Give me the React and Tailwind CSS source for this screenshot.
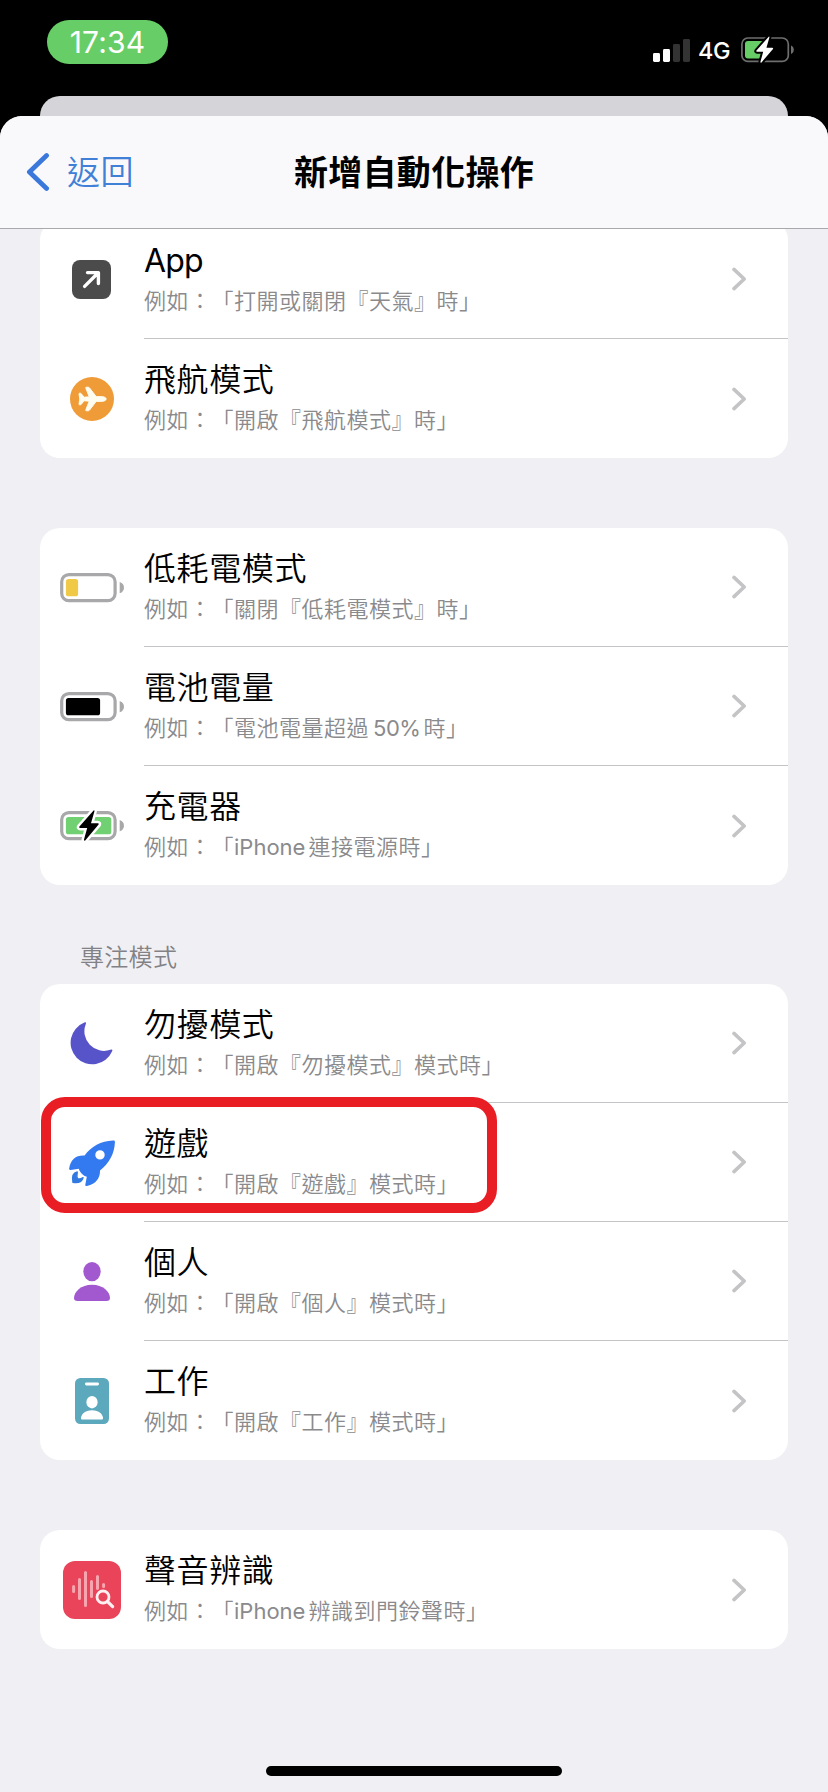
import React from "react";

function Bolt({ fill, halo, haloWidth }) {
  const d = "M33.6 -0.6 L19.4 15.6 Q18.6 16.9 20 16.9 H27.2 L24 28.6 Q24 30.4 25.2 29.4 L38.6 13.6 Q39.2 12.3 37.8 12.3 H31 L34.4 0.4 Q34.6 -1.2 33.6 -0.6 Z";
  return (
    <g>
      <path d={d} fill={halo} stroke={halo} strokeWidth={haloWidth} strokeLinejoin="round" />
      <path d={d} fill={fill} />
    </g>
  );
}

function BatteryIcon({ level, color, charging }) {
  return (
    <svg className="h-[30px] w-16 overflow-visible" viewBox="0 0 64 30">
      <rect x="1.7" y="1.6" width="53.4" height="26.1" rx="7.2" fill="none" stroke="#a8a8aa" strokeWidth="3.2" />
      <path d="M59.7 9.1 C62.6 10.1 64 12.3 64 14.7 C64 17.1 62.6 19.3 59.7 20.3 Z" fill="#a8a8aa" />
      <rect x="5.9" y="5.9" width={level} height="17.4" rx="2.6" fill={color} />
      {charging && <Bolt fill="#000000" halo="#ffffff" haloWidth="5" />}
    </svg>
  );
}

function AppIcon() {
  return (
    <svg className="h-[39px] w-[39px]" viewBox="0 0 39 39">
      <rect width="39" height="39" rx="8" fill="#4b4b4b" />
      <path d="M12.6 26.4 L26 13 M15.5 12.6 H26.4 V23.5" fill="none" stroke="#ffffff" strokeWidth="3.4" strokeLinecap="round" strokeLinejoin="round" />
    </svg>
  );
}

function AirplaneIcon() {
  return (
    <svg className="h-11 w-11" viewBox="0 0 44 44">
      <circle cx="22" cy="22" r="22" fill="#ee9b38" />
      <path
        d="M36.2 22 C36.2 20.6 34 19.6 31.5 19.6 H26.2 L19.6 11 Q19 10.2 18 10.2 H16.4 Q15.4 10.2 15.8 11.2 L19.2 19.8 L14 20.2 L11.4 16.8 Q11 16.2 10.2 16.2 H9.6 Q8.9 16.2 9 17 L9.8 22 L9 27 Q8.9 27.8 9.6 27.8 H10.2 Q11 27.8 11.4 27.2 L14 23.8 L19.2 24.2 L15.8 32.8 Q15.4 33.8 16.4 33.8 H18 Q19 33.8 19.6 33 L26.2 24.4 H31.5 C34 24.4 36.2 23.4 36.2 22 Z"
        fill="#fffdf0"
        stroke="#fffdf0"
        strokeWidth="0.9"
        strokeLinejoin="round"
      />
    </svg>
  );
}

function MoonIcon() {
  return (
    <svg className="h-[43px] w-[43px]" viewBox="0 0 43 43">
      <path d="M14.4 0.6 C15.8 0 16.4 0.5 15.8 2 A19.6 19.6 0 0 0 40.4 27.8 C42.2 27 42.9 27.7 42 29.4 A21.6 21.6 0 1 1 14.4 0.6 Z" fill="#5754c9" />
    </svg>
  );
}

function RocketIcon() {
  return (
    <svg className="h-[46px] w-[46px]" viewBox="0 0 46 46">
      <path fillRule="evenodd" d="M44 0.5 C45.4 0.4 46 0.9 45.9 2.4 C45.5 13.5 40 23.5 31 30.5 C31.2 38 27.5 43.8 18 46 C16.6 46.2 16 45.4 16.4 44.2 L17.8 36.8 C14.5 36 10.6 32.2 9.8 28.8 L1.6 30 C0.4 30.2 -0.1 29.4 0.2 28.2 C1.8 19.6 7 15 15.6 15.6 C22 6.5 32 1 44 0.5 Z M31 10.2 A4.7 4.7 0 1 0 31 19.6 A4.7 4.7 0 1 0 31 10.2 Z" fill="#337af0" />
      <path d="M8.2 32 C4.2 32.8 3 37.2 4 42.4 C9 43.2 13 41.6 14 37.8 C12.6 38 10.8 39.6 8.8 38.6 C6.8 37.2 8.4 34.4 8.2 32 Z" fill="#337ae0" stroke="#337ae0" strokeWidth="1.4" strokeLinejoin="round" />
    </svg>
  );
}

function PersonIcon() {
  return (
    <svg className="h-[39px] w-9" viewBox="0 0 36 39">
      <ellipse cx="18" cy="9.6" rx="8.7" ry="9.6" fill="#a259d0" />
      <path d="M3.6 39 C1 39 0 38 0 36 C0 30 7 22.8 18 22.8 C29 22.8 36 30 36 36 C36 38 35 39 32.4 39 Z" fill="#a259d0" />
    </svg>
  );
}

function BadgeIcon() {
  return (
    <svg className="h-[46px] w-[34px]" viewBox="0 0 34 46">
      <rect width="34" height="46" rx="5.4" fill="#5ca9be" />
      <rect x="10" y="4.6" width="14" height="2.8" rx="1.4" fill="#ffffff" />
      <ellipse cx="17" cy="24.2" rx="5.6" ry="6.2" fill="#ffffff" />
      <path d="M7.6 41.6 C6.4 41.6 6 41 6 40 C6 36.6 10 32.2 17 32.2 C24 32.2 28 36.6 28 40 C28 41 27.6 41.6 26.4 41.6 Z" fill="#ffffff" />
    </svg>
  );
}

function SoundIcon() {
  return (
    <svg className="h-[58px] w-[58px]" viewBox="0 0 58 58">
      <rect width="58" height="58" rx="12" fill="#e9445a" />
      <path d="M10.6 25.5 V30.5 M16.5 18.5 V37.5 M22.5 11.5 V44.5 M28.5 20.5 V35.5 M34.5 15.5 V27.5 M40.6 23.5 V25.5" stroke="#f7a6b0" strokeWidth="3" strokeLinecap="round" />
      <circle cx="40" cy="36" r="6" fill="#e9445a" stroke="#e9445a" strokeWidth="5" />
      <circle cx="40" cy="36" r="6" fill="none" stroke="#fff0f2" strokeWidth="2.8" />
      <path d="M44.6 40.6 L49.6 45.6" stroke="#fff0f2" strokeWidth="3.2" strokeLinecap="round" />
    </svg>
  );
}

function Row({ icon, title, detail, last }) {
  return (
    <div className="flex h-[119px]">
      <div className="flex w-[104px] shrink-0 items-center justify-center pr-px">{icon}</div>
      <div className={last ? "flex flex-1 justify-between" : "flex flex-1 justify-between border-b border-[#c4c4c6]"}>
        <div className="flex flex-col gap-1 pt-[21px]">
          <div className="h-10 text-[32px] leading-10 font-[350] tracking-[0.6px] whitespace-nowrap text-black">{title}</div>
          <div className="h-8 text-[22px] leading-8 font-[350] tracking-[0.5px] whitespace-nowrap text-[#8a8a8c]">例如：「{detail}」</div>
        </div>
        <div className="flex items-center pr-[41px]">
          <svg className="h-6 w-[15px]" viewBox="0 0 15 24">
            <path d="M2 2.4 L12.2 12 L2 21.6" fill="none" stroke="#c4c4c6" strokeWidth="3.6" strokeLinecap="round" strokeLinejoin="round" />
          </svg>
        </div>
      </div>
    </div>
  );
}

function Card({ rows, className }) {
  return (
    <section className={"mx-10 shrink-0 rounded-[20px] bg-white " + className}>
      {rows.map((row, i) => (
        <Row key={row.title} icon={row.icon} title={row.title} detail={row.detail} last={i === rows.length - 1} />
      ))}
    </section>
  );
}

const general = [
  { icon: <AppIcon />, title: <span className="font-normal tracking-[-0.8px]">App</span>, detail: "打開或關閉『天氣』時" },
  { icon: <AirplaneIcon />, title: "飛航模式", detail: "開啟『飛航模式』時" },
];

const power = [
  { icon: <BatteryIcon level="12.2" color="#f0c946" />, title: "低耗電模式", detail: "關閉『低耗電模式』時" },
  {
    icon: <BatteryIcon level="34.2" color="#000000" />,
    title: "電池電量",
    detail: <>電池電量超過<span className="mr-[3px] ml-1 font-normal tracking-[-0.5px]">50%</span>時</>,
  },
  {
    icon: <BatteryIcon level="45.4" color="#70d072" charging />,
    title: "充電器",
    detail: <><span className="mr-[3px] font-normal tracking-[0px]">iPhone</span>連接電源時</>,
  },
];

const focusTop = [
  { icon: <MoonIcon />, title: "勿擾模式", detail: "開啟『勿擾模式』模式時" },
  { icon: <RocketIcon />, title: "遊戲", detail: "開啟『遊戲』模式時" },
  { icon: <PersonIcon />, title: "個人", detail: "開啟『個人』模式時" },
  { icon: <BadgeIcon />, title: "工作", detail: "開啟『工作』模式時" },
];

const sound = [
  {
    icon: <SoundIcon />,
    title: "聲音辨識",
    detail: <><span className="mr-[3px] font-normal tracking-[0px]">iPhone</span>辨識到門鈴聲時</>,
  },
];

function StatusBar() {
  return (
    <div className="flex h-24 shrink-0 items-start justify-between pr-[34px] pl-[47px] text-white">
      <div className="mt-5 flex h-11 w-[121px] items-center justify-center rounded-full bg-[#67ce67] text-[30px] tracking-[0.2px]">
        17:34
      </div>
      <div className="mt-9 flex h-7 items-center">
        <svg className="h-6 w-[37px]" viewBox="0 0 37 24">
          <rect x="0" y="15" width="7" height="9" rx="1.4" fill="#ffffff" />
          <rect x="10" y="11" width="7" height="13" rx="1.4" fill="#ffffff" />
          <rect x="20" y="6" width="7" height="18" rx="1.4" fill="#333333" />
          <rect x="30" y="1" width="7" height="23" rx="1.4" fill="#333333" />
        </svg>
        <div className="ml-2 w-[43px] pt-px text-[23.5px] leading-7 font-medium tracking-[-0.4px]">4G</div>
        <svg className="h-[26px] w-[53px] overflow-visible" viewBox="0 0 53 26">
          <rect x="0.9" y="1" width="46.4" height="23.4" rx="6" fill="none" stroke="#6e6e6e" strokeWidth="1.7" />
          <path d="M50 8.6 C52 9.4 52.8 11 52.8 12.8 C52.8 14.6 52 16.2 50 17 Z" fill="#6e6e6e" />
          <rect x="4" y="4" width="19" height="17.4" rx="3" fill="#67ce67" />
          <g transform="translate(-1.2 0.2) scale(0.86)">
            <Bolt fill="#ffffff" halo="#000000" haloWidth="4.6" />
          </g>
        </svg>
      </div>
    </div>
  );
}

export default function App() {
  return (
    <div
      lang="zh-TW"
      className="relative flex h-[1792px] w-[828px] flex-col overflow-hidden bg-black font-['Inter','Noto_Sans_CJK_TC',sans-serif] [text-spacing-trim:space-all] [text-autospace:no-autospace]"
    >
      <StatusBar />
      <div className="mx-10 h-5 shrink-0 rounded-t-[20px] bg-[#d5d5d9]" />
      <div className="flex flex-1 flex-col overflow-hidden rounded-t-[22px] bg-[#f0f0f4]">
        <header className="z-10 grid h-[113px] shrink-0 grid-cols-3 items-center border-b border-[#a9a9ac] bg-[#f9f9fb]">
          <div className="flex items-center gap-[17px] pl-[26px]">
            <svg className="h-[38px] w-6" viewBox="0 0 24 38">
              <path d="M20.6 2.6 L3.4 19 L20.6 35.4" fill="none" stroke="#3a78dc" strokeWidth="4.8" strokeLinecap="round" strokeLinejoin="round" />
            </svg>
            <span className="text-[33px] leading-[44px] font-[350] tracking-[0.6px] text-[#4080d6]">返回</span>
          </div>
          <h1 className="pt-px text-center text-[34px] leading-[44px] font-semibold tracking-[0.3px] whitespace-nowrap text-black">新增自動化操作</h1>
        </header>
        <main className="flex flex-1 flex-col">
          <Card rows={general} className="-mt-[9px]" />
          <Card rows={power} className="mt-[70px]" />
          <h2 className="mt-14 h-[34px] shrink-0 pl-20 text-[24px] leading-[34px] font-[350] tracking-[0.3px] text-[#818186]">專注模式</h2>
          <Card rows={focusTop} className="mt-[9px]" />
          <Card rows={sound} className="mt-[70px]" />
        </main>
        <div className="mb-4 h-[10px] w-[296px] shrink-0 self-center rounded-full bg-black" />
      </div>
      <div className="absolute top-[1097px] left-[41px] h-[116px] w-[456px] rounded-[24px] border-[10px] border-[#e91d24]" />
    </div>
  );
}
